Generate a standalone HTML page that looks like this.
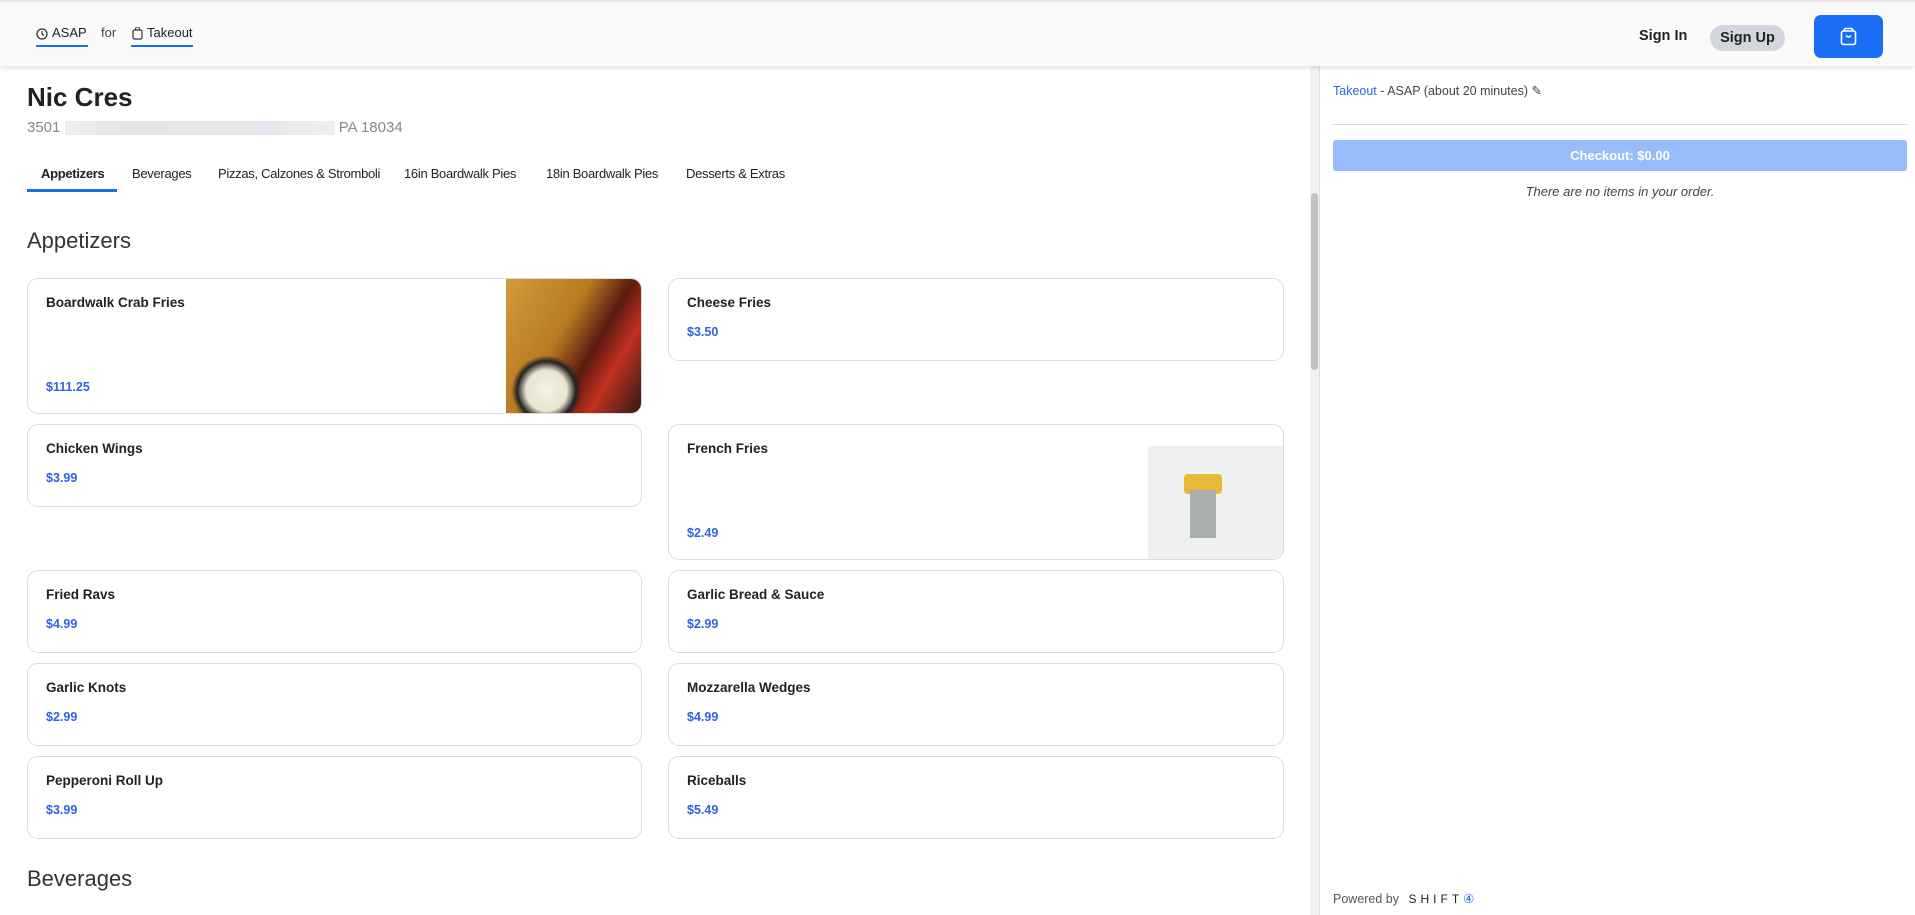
<!DOCTYPE html>
<html><head><meta charset="utf-8"><style>
*{box-sizing:border-box;margin:0;padding:0}
body{width:1915px;height:915px;overflow:hidden;background:#fff;font-family:"Liberation Sans",Arial,sans-serif;color:#222;position:relative}
.hdr{position:absolute;left:0;top:0;width:1915px;height:66px;background:#fafafa;border-top:2px solid #e6e6e6;box-shadow:0 2px 4px rgba(0,0,0,.12);z-index:2}
.abs{position:absolute}
.card{position:absolute;border:1px solid #dcdcdc;border-radius:11px;background:#fff;overflow:hidden}
.card .n{position:absolute;left:18px;top:16px;font-size:13.5px;font-weight:bold;color:#222}
.card .p{position:absolute;left:18px;font-size:12.5px;font-weight:bold;color:#2f63e6}
.tab{position:absolute;top:166px;font-size:13px;letter-spacing:-0.3px;color:#222}
</style></head><body>
<div class="hdr">
  <svg class="abs" style="left:36px;top:26px" width="12" height="12" viewBox="0 0 12 12"><circle cx="6" cy="6" r="5" fill="none" stroke="#333" stroke-width="1.3"/><path d="M6 3v3l2 1.5" fill="none" stroke="#333" stroke-width="1.2"/></svg>
  <div class="abs" style="left:52px;top:23px;font-size:13px;color:#222">ASAP</div>
  <div class="abs" style="left:36px;top:43px;width:52px;height:2px;background:#1a6ef5"></div>
  <div class="abs" style="left:101px;top:23px;font-size:13px;color:#444">for</div>
  <svg class="abs" style="left:132px;top:25px" width="11" height="13" viewBox="0 0 11 13"><rect x="1" y="3" width="9" height="9" rx="1.5" fill="none" stroke="#333" stroke-width="1.2"/><path d="M3.5 3V2a2 2 0 0 1 4 0v1" fill="none" stroke="#333" stroke-width="1.1"/></svg>
  <div class="abs" style="left:147px;top:23px;font-size:13px;color:#222">Takeout</div>
  <div class="abs" style="left:131px;top:43px;width:62px;height:2px;background:#1a6ef5"></div>
  <div class="abs" style="left:1639px;top:26px;font-size:14.5px;font-weight:bold;color:#222">Sign In</div>
  <div class="abs" style="left:1710px;top:23px;width:75px;height:26px;border-radius:13px;background:#d3d6dd;font-size:14.5px;font-weight:bold;color:#222;text-align:center;line-height:26px">Sign Up</div>
  <div class="abs" style="left:1814px;top:13px;width:69px;height:43px;border-radius:7px;background:#1a6ef5"></div>
  <svg class="abs" style="left:1840px;top:25px" width="17" height="19" viewBox="0 0 17 19"><rect x="1.5" y="4" width="14" height="13.5" rx="2" fill="none" stroke="#fff" stroke-width="1.6"/><path d="M3.5 4l1.5-2.5h7L13.5 4" fill="none" stroke="#fff" stroke-width="1.4"/><path d="M6 8.5q2.5 3 5 0" fill="none" stroke="#fff" stroke-width="1.4"/></svg>
</div>

<div class="abs" style="left:27px;top:82px;font-size:26px;font-weight:bold;color:#222">Nic Cres</div>
<div class="abs" style="left:27px;top:119px;font-size:15px;color:#888">3501 <span style="display:inline-block;width:270px;height:14px;background:linear-gradient(90deg,#eee,#e3e3ea,#ede8e4,#e6e6ee,#efefef);vertical-align:middle"></span> PA 18034</div>

<div class="tab" style="left:41px;font-weight:bold">Appetizers</div>
<div class="tab" style="left:132px">Beverages</div>
<div class="tab" style="left:218px">Pizzas, Calzones &amp; Stromboli</div>
<div class="tab" style="left:404px">16in Boardwalk Pies</div>
<div class="tab" style="left:546px">18in Boardwalk Pies</div>
<div class="tab" style="left:686px">Desserts &amp; Extras</div>
<div class="abs" style="left:27px;top:189px;width:90px;height:3px;background:#1a6ef5"></div>

<div class="abs" style="left:27px;top:228px;font-size:22px;color:#333">Appetizers</div>

<div class="card" style="left:27px;top:278px;width:615px;height:136px"><div class="n">Boardwalk Crab Fries</div><div class="p" style="top:101px">$111.25</div>
<div class="abs" style="right:0;top:0;width:135px;height:136px;background:radial-gradient(circle at 30% 82%,#f4f1e6 0,#e9e4d2 14%,#222 20%,transparent 24%),linear-gradient(120deg,#d39a3a 0,#b97a22 40%,#5a1a10 60%,#c23020 75%,#2a1a14 100%)"></div></div>
<div class="card" style="left:668px;top:278px;width:616px;height:83px"><div class="n">Cheese Fries</div><div class="p" style="top:46px">$3.50</div></div>

<div class="card" style="left:27px;top:424px;width:615px;height:83px"><div class="n">Chicken Wings</div><div class="p" style="top:46px">$3.99</div></div>
<div class="card" style="left:668px;top:424px;width:616px;height:136px"><div class="n">French Fries</div><div class="p" style="top:101px">$2.49</div>
<div class="abs" style="right:0;top:21px;width:135px;height:115px;background:#eef1f0"><div class="abs" style="left:36px;top:28px;width:38px;height:20px;background:#e6b93a;border-radius:4px"></div><div class="abs" style="left:42px;top:44px;width:26px;height:48px;background:#a9adae"></div></div></div>

<div class="card" style="left:27px;top:570px;width:615px;height:83px"><div class="n">Fried Ravs</div><div class="p" style="top:46px">$4.99</div></div>
<div class="card" style="left:668px;top:570px;width:616px;height:83px"><div class="n">Garlic Bread &amp; Sauce</div><div class="p" style="top:46px">$2.99</div></div>
<div class="card" style="left:27px;top:663px;width:615px;height:83px"><div class="n">Garlic Knots</div><div class="p" style="top:46px">$2.99</div></div>
<div class="card" style="left:668px;top:663px;width:616px;height:83px"><div class="n">Mozzarella Wedges</div><div class="p" style="top:46px">$4.99</div></div>
<div class="card" style="left:27px;top:756px;width:615px;height:83px"><div class="n">Pepperoni Roll Up</div><div class="p" style="top:46px">$3.99</div></div>
<div class="card" style="left:668px;top:756px;width:616px;height:83px"><div class="n">Riceballs</div><div class="p" style="top:46px">$5.49</div></div>

<div class="abs" style="left:27px;top:866px;font-size:22px;color:#333">Beverages</div>

<div class="abs" style="left:1310px;top:66px;width:9px;height:849px;background:#f1f1f1"></div>
<div class="abs" style="left:1311px;top:193px;width:7px;height:177px;background:#c1c1c1;border-radius:4px"></div>
<div class="abs" style="left:1319px;top:66px;width:1px;height:849px;background:#ddd"></div>

<div class="abs" style="left:1333px;top:83px;font-size:12.5px;color:#444"><span style="color:#2f63e6">Takeout</span> - ASAP (about 20 minutes) ✎</div>
<div class="abs" style="left:1333px;top:124px;width:574px;height:1px;background:#ddd"></div>
<div class="abs" style="left:1333px;top:140px;width:574px;height:31px;border-radius:3px;background:#96bdf9;color:#fff;font-size:13px;font-weight:bold;text-align:center;line-height:31px">Checkout: $0.00</div>
<div class="abs" style="left:1333px;top:184px;width:574px;text-align:center;font-size:13px;font-style:italic;color:#444">There are no items in your order.</div>
<div class="abs" style="left:1333px;top:891px;font-size:12.5px;color:#555">Powered by <span style="margin-left:6px;letter-spacing:4px;color:#222;font-size:12px">SHIFT</span><span style="color:#1a6ef5">④</span></div>
</body></html>
